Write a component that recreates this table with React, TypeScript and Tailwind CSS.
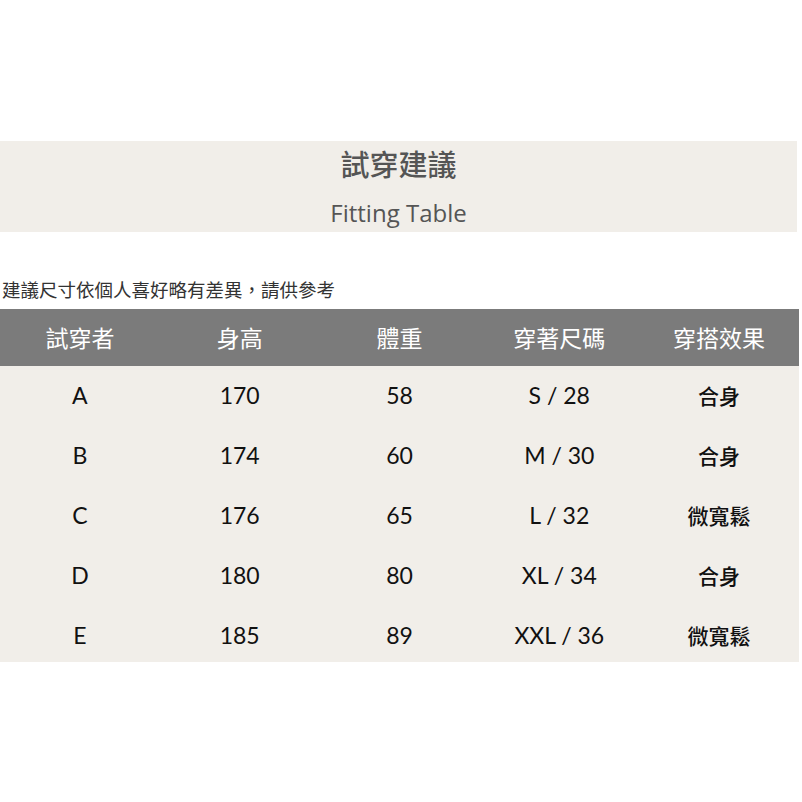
const rows = [
  ['A', '170', '58', 'S / 28', '合身'],
  ['B', '174', '60', 'M / 30', '合身'],
  ['C', '176', '65', 'L / 32', '微寬鬆'],
  ['D', '180', '80', 'XL / 34', '合身'],
  ['E', '185', '89', 'XXL / 36', '微寬鬆'],
];

const heads = ['試穿者', '身高', '體重', '穿著尺碼', '穿搭效果'];

export default function App() {
  return (
    <div className="w-[802px] h-[802px] bg-white font-['Lato','Noto_Sans_CJK_TC',sans-serif] pt-[141px]">
      {/* title band */}
      <div className="w-[797px] h-[91px] bg-[#f1eee9] flex flex-col items-center text-[#555]">
        <div className="text-[29px] leading-none mt-[8px] font-medium font-['Noto_Sans_CJK_TC',sans-serif]">試穿建議</div>
        <div className="text-[24px] leading-none mt-[23px] font-medium font-['Open_Sans','Noto_Sans_CJK_TC',sans-serif]">Fitting Table</div>
      </div>

      <div className="mt-[48px] pl-[2px] text-[18.5px] leading-none text-[#333] font-['Noto_Sans_CJK_TC',sans-serif]">
        建議尺寸依個人喜好略有差異，請供參考
      </div>

      <div className="mt-[10px] w-[799px]">
        <div className="grid grid-cols-5 h-[57px] bg-[#7b7b7b] text-white text-[23px] font-['Noto_Sans_CJK_TC',sans-serif]">
          {heads.map((h) => (
            <div key={h} className="flex items-center justify-center">{h}</div>
          ))}
        </div>
        <div className="bg-[#f1eee9] h-[296px] overflow-hidden">
          {rows.map((r) => (
            <div key={r[0]} className="grid grid-cols-5 h-[60px] text-[23px] text-[#111]">
              {r.map((c, i) => (
                <div key={i} className={`flex items-center justify-center ${i === 4 ? "font-['Noto_Sans_CJK_TC',sans-serif] text-[21px] font-medium" : ''}`}>
                  {c}
                </div>
              ))}
            </div>
          ))}
        </div>
      </div>
    </div>
  );
}
